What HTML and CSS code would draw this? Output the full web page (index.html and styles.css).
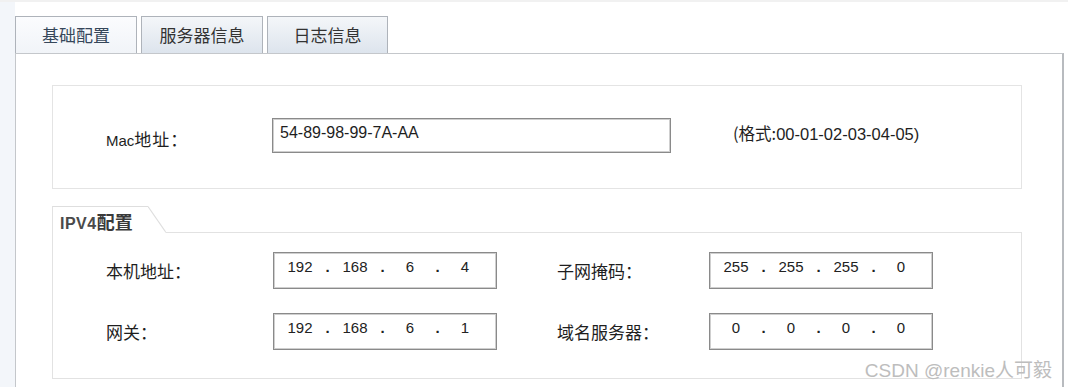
FILE: index.html
```html
<!DOCTYPE html>
<html lang="zh-CN">
<head>
  <meta charset="UTF-8">
  <title>基础配置</title>
  <link rel="stylesheet" href="styles.css">
</head>
<body>
  <div class="page">
    <!-- tabs -->
    <div class="tabs">
      <div class="tab active">基础配置</div>
      <div class="tab">服务器信息</div>
      <div class="tab">日志信息</div>
    </div>

    <div class="panel">
      <!-- MAC -->
      <div class="mac-box">
        <span class="label mac-label"><span class="latin">Mac</span>地址：</span>
        <div class="text-input">54-89-98-99-7A-AA</div>
        <span class="hint">(格式:<span class="latin">00-01-02-03-04-05)</span></span>
      </div>

      <!-- IPV4 group -->
      <div class="group">
        <div class="group-head">
          <div class="legend"><span class="latin">IPV4</span>配置</div>
          <svg class="slant" width="18" height="27" viewBox="0 0 18 27">
            <line x1="0" y1="0.5" x2="18" y2="26.5" stroke="#dedede" stroke-width="1.2"/>
          </svg>
          <div class="head-line"></div>
        </div>
        <div class="group-body">
          <span class="label">本机地址：</span>
          <div class="ip-input">
            <span class="seg">192</span><span class="dot">.</span><span class="seg">168</span><span class="dot">.</span><span class="seg">6</span><span class="dot">.</span><span class="seg">4</span>
          </div>
          <span class="label right">子网掩码：</span>
          <div class="ip-input">
            <span class="seg">255</span><span class="dot">.</span><span class="seg">255</span><span class="dot">.</span><span class="seg">255</span><span class="dot">.</span><span class="seg">0</span>
          </div>

          <span class="label">网关：</span>
          <div class="ip-input">
            <span class="seg">192</span><span class="dot">.</span><span class="seg">168</span><span class="dot">.</span><span class="seg">6</span><span class="dot">.</span><span class="seg">1</span>
          </div>
          <span class="label right">域名服务器：</span>
          <div class="ip-input">
            <span class="seg">0</span><span class="dot">.</span><span class="seg">0</span><span class="dot">.</span><span class="seg">0</span><span class="dot">.</span><span class="seg">0</span>
          </div>
        </div>
      </div>
    </div>

    <div class="watermark">CSDN @renkie人可毅</div>
  </div>
</body>
</html>
```

FILE: styles.css
```css
body {
  margin: 0;
  padding: 0;
  font-family: "Noto Sans CJK SC", sans-serif;
  color: #1e1e1e;
  background: linear-gradient(to right, #f3f6fa 15px, #ffffff 15px);
  overflow: hidden;
}

.page {
  position: relative;
  height: 387px;
  box-sizing: border-box;
  border-top: 2px solid #f1f1f1;
  padding: 14px 0 0 15px;
}

.latin {
  font-family: "Liberation Sans", sans-serif;
}

/* tabs */
.tabs {
  display: flex;
  gap: 4px;
}

.tab {
  box-sizing: border-box;
  width: 122px;
  height: 37px;
  border: 1px solid #aeb3ba;
  border-bottom: none;
  background: linear-gradient(#f4f6f9, #dde4ed);
  font-size: 17px;
  line-height: 36px;
  text-align: center;
  color: #333;
}

.tab:last-child {
  width: 121px;
}

.tab.active {
  background: linear-gradient(#fbfcfe, #f1f4f8);
  color: #36475a;
}

/* panel */
.panel {
  width: 1049px;
  height: 334px;
  box-sizing: border-box;
  border-top: 1px solid #c4c7cb;
  border-left: 1px solid #c4c7cb;
  border-right: 2px solid #b8bbbf;
  background: #fff;
  padding: 31px 40px 0 36px;
}

.label {
  font-size: 17px;
  color: #1e1e1e;
}

.mac-box {
  display: flex;
  align-items: center;
  height: 104px;
  box-sizing: border-box;
  border: 1px solid #e4e4e4;
  padding-left: 53px;
}

.mac-label {
  width: 166px;
  padding-top: 2px;
  letter-spacing: 1px;
}

.mac-label .latin {
  font-size: 15px;
  letter-spacing: 0;
}

.text-input {
  box-sizing: border-box;
  width: 399px;
  height: 35px;
  border: 1px solid #8a8a8a;
  box-shadow: inset 0 0 0 1px #cfcfcf;
  padding: 5px 0 0 7px;
  font-family: "Liberation Sans", sans-serif;
  font-size: 16px;
  line-height: 18px;
  margin-top: -4px;
}

.hint {
  margin-left: 62px;
  margin-top: -8px;
  font-size: 16.5px;
}

/* ipv4 group */
.group {
  margin-top: 17px;
}

.group-head {
  display: flex;
  height: 27px;
}

.legend {
  box-sizing: border-box;
  width: 96px;
  border-top: 1px solid #dedede;
  border-left: 1px solid #e2e2e2;
  padding: 4px 0 0 7px;
  font-size: 18px;
  font-weight: bold;
  line-height: 21px;
  color: #3a3a3a;
  white-space: nowrap;
}

.legend .latin {
  color: #4a4a4a;
  font-size: 16px;
  letter-spacing: 0.5px;
}

.slant {
  display: block;
}

.head-line {
  flex: 1;
  border-bottom: 1px solid #e2e2e2;
}

.group-body {
  display: grid;
  grid-template-columns: 167px 224px 212px 224px;
  grid-auto-rows: 37px;
  row-gap: 24px;
  align-items: center;
  height: 146px;
  box-sizing: border-box;
  border: 1px solid #e2e2e2;
  border-top: none;
  padding: 19px 0 0 53px;
}

.label.right {
  padding-left: 60px;
}

.ip-input {
  box-sizing: border-box;
  height: 37px;
  display: flex;
  border: 1px solid #8a8a8a;
  box-shadow: inset 0 0 0 1px #cfcfcf;
  padding: 5px 0 0 4px;
  font-family: "Liberation Sans", sans-serif;
  font-size: 15px;
  line-height: 18px;
  color: #222;
}

.seg {
  width: 44px;
  text-align: center;
}

.dot {
  width: 11px;
  text-align: center;
  font-weight: bold;
}

/* watermark */
.watermark {
  position: absolute;
  right: 16px;
  top: 353px;
  font-family: "Liberation Sans", "Noto Sans CJK SC", sans-serif;
  font-size: 19px;
  color: #bdbdbd;
}
```
